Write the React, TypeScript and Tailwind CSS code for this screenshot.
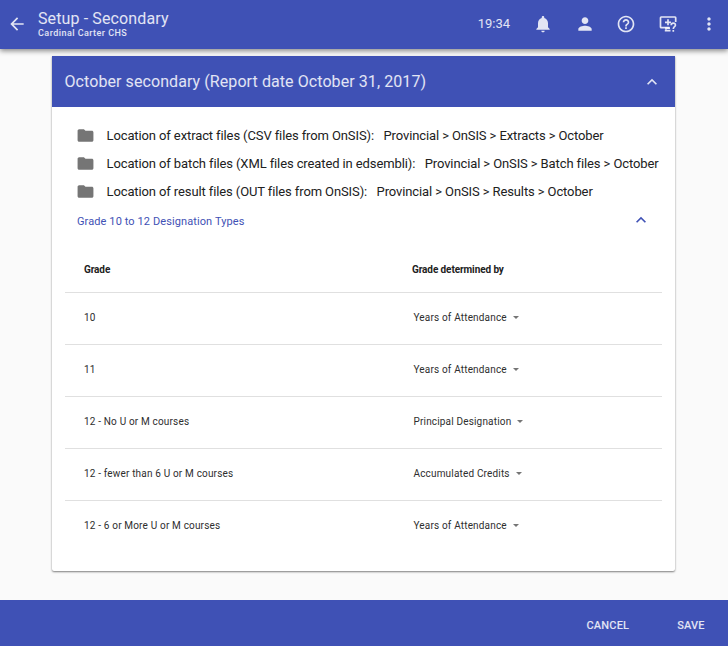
import React from "react";

function Icon({ d, className }: { d: string; className: string }) {
  return (
    <svg viewBox="0 0 24 24" fill="currentColor" className={`shrink-0 ${className}`} aria-hidden="true">
      <path d={d} />
    </svg>
  );
}

const icons = {
  back: "M20 11H7.83l5.59-5.59L12 4l-8 8 8 8 1.41-1.41L7.83 13H20v-2z",
  bell: "M12 22c1.1 0 2-.9 2-2h-4c0 1.1.9 2 2 2zm6-6v-5c0-3.07-1.64-5.64-4.5-6.32V4c0-.83-.67-1.5-1.5-1.5s-1.5.67-1.5 1.5v.68C7.63 5.36 6 7.92 6 11v5l-2 2v1h16v-1l-2-2z",
  person: "M12 12c2.21 0 4-1.79 4-4s-1.79-4-4-4-4 1.79-4 4 1.79 4 4 4zm0 2c-2.67 0-8 1.34-8 4v2h16v-2c0-2.66-5.33-4-8-4z",
  help: "M11 18h2v-2h-2v2zm1-16C6.48 2 2 6.48 2 12s4.48 10 10 10 10-4.48 10-10S17.52 2 12 2zm0 18c-4.41 0-8-3.59-8-8s3.59-8 8-8 8 3.59 8 8-3.59 8-8 8zm0-14c-2.21 0-4 1.79-4 4h2c0-1.1.9-2 2-2s2 .9 2 2c0 2-3 1.75-3 5h2c0-2.25 3-2.5 3-5 0-2.21-1.79-4-4-4z",
  more: "M12 8c1.1 0 2-.9 2-2s-.9-2-2-2-2 .9-2 2 .9 2 2 2zm0 2c-1.1 0-2 .9-2 2s.9 2 2 2 2-.9 2-2-.9-2-2-2zm0 6c-1.1 0-2 .9-2 2s.9 2 2 2 2-.9 2-2-.9-2-2-2z",
  folder: "M10 4H4c-1.1 0-1.99.9-1.99 2L2 18c0 1.1.9 2 2 2h16c1.1 0 2-.9 2-2V8c0-1.1-.9-2-2-2h-8l-2-2z",
  up: "M7.41 15.41 12 10.83l4.59 4.58L18 14l-6-6-6 6z",
};

function RemoteHelpIcon() {
  return (
    <svg viewBox="0 0 20 20" fill="none" stroke="currentColor" className="h-5 w-5 shrink-0" aria-hidden="true">
      <path d="M11.5 13.7H3.2Q2.5 13.7 2.5 13V3.7Q2.5 3 3.2 3H17Q17.7 3 17.7 3.7V8" strokeWidth="1.7" />
      <path d="M10 5.3v6M7 8.3h6" strokeWidth="1.7" />
      <path d="M6.8 16.6h5.7M8 15.6v-1.5h4" strokeWidth="1.8" />
      <path d="M13.2 11.2Q13.2 9.2 15.3 9.2T17.4 11.2C17.4 12.8 15.3 12.7 15.3 15M15.3 16v1.7" strokeWidth="1.7" />
    </svg>
  );
}

const locations = [
  ["Location of extract files (CSV files from OnSIS):", "Provincial > OnSIS > Extracts > October"],
  ["Location of batch files (XML files created in edsembli):", "Provincial > OnSIS > Batch files > October"],
  ["Location of result files (OUT files from OnSIS):", "Provincial > OnSIS > Results > October"],
];

const grades = [
  ["10", "Years of Attendance"],
  ["11", "Years of Attendance"],
  ["12 - No U or M courses", "Principal Designation"],
  ["12 - fewer than 6 U or M courses", "Accumulated Credits"],
  ["12 - 6 or More U or M courses", "Years of Attendance"],
];

export default function App() {
  return (
    <div className="flex h-[646px] w-[728px] flex-col overflow-hidden bg-[#fafafa] font-[Roboto,sans-serif] text-[#212121]">
      <header className="z-10 flex h-[49px] shrink-0 items-center bg-[#3f51b5] pl-[7px] text-white/85 shadow-[0_2px_5px_rgba(0,0,0,0.45)]">
        <Icon d={icons.back} className="h-5 w-5 mt-[-2px]" />
        <div className="ml-[11px] flex-1">
          <h1 className="text-[16px] font-normal leading-[18px] tracking-[0.12px]">Setup - Secondary</h1>
          <p className="text-[9px] font-medium leading-[11px] tracking-[0.45px]">Cardinal Carter CHS</p>
        </div>
        <div className="mt-[-2px] flex items-center">
          <span className="mr-[23px] text-[13px] font-normal leading-5">19:34</span>
          <Icon d={icons.bell} className="mr-[22px] h-5 w-5" />
          <Icon d={icons.person} className="mr-[21px] h-5 w-5" />
          <Icon d={icons.help} className="mr-[22px] h-5 w-5" />
          <RemoteHelpIcon />
          <Icon d={icons.more} className="ml-[21px] mr-[9px] h-5 w-5" />
        </div>
      </header>

      <main className="mx-[52px] mt-[7px] h-[515px] w-[623px] shrink-0 rounded-b-[2px] bg-white shadow-[0_1px_2px_rgba(0,0,0,0.5)]">
        <div className="flex h-[51px] items-center justify-between bg-[#3f51b5] pl-[12.5px] pr-[13px] text-white/85">
          <h2 className="text-[16px] font-normal leading-5 tracking-[0.08px]">October secondary (Report date October 31, 2017)</h2>
          <Icon d={icons.up} className="h-5 w-5" />
        </div>

        <ul className="pl-6 pt-[14px]">
          {locations.map(([label, path]) => (
            <li key={label} className="flex h-7 items-center whitespace-nowrap text-[13px] tracking-[-0.11px]">
              <Icon d={icons.folder} className="h-[19px] w-[19px] text-[#757575]" />
              <span className="ml-[11.5px] pt-px">{label}</span>
              <span className="ml-[9.5px] pt-px">{path}</span>
            </li>
          ))}
        </ul>

        <div className="mt-[5px] flex h-[22px] items-center justify-between pl-[25px] pr-6 text-[#3f51b5]">
          <span className="pt-[2px] text-[11px] tracking-[0.1px]">Grade 10 to 12 Designation Types</span>
          <Icon d={icons.up} className="h-5 w-5 mt-[-3px]" />
        </div>

        <div className="mx-[13px] mt-4">
          <div className="flex h-[45px] items-center border-b border-[#e0e0e0] pb-[2px] pl-[19px] text-[10px] font-bold tracking-[-0.1px]">
            <span className="w-[328px]">Grade</span>
            <span>Grade determined by</span>
          </div>
          {grades.map(([grade, method]) => (
            <div key={grade} className="flex h-[52px] items-center border-b border-[#e0e0e0] pb-[2px] pl-[19px] text-[10px] tracking-[0.17px] text-[#2e2e2e] last:border-transparent">
              <span className="w-[329.5px]">{grade}</span>
              <span>{method}</span>
              <span className="ml-[6px] h-0 w-0 border-x-[3px] border-t-[3px] border-x-transparent border-t-[#757575]" />
            </div>
          ))}
        </div>
      </main>

      <footer className="mt-auto flex h-[46px] shrink-0 items-center justify-end bg-[#3f51b5] pr-[23.5px] pt-[6px] text-[11px] font-medium text-white/85">
        <button className="mr-[48px] tracking-[0.2px]">CANCEL</button>
        <button className="tracking-[0.1px]">SAVE</button>
      </footer>
    </div>
  );
}
